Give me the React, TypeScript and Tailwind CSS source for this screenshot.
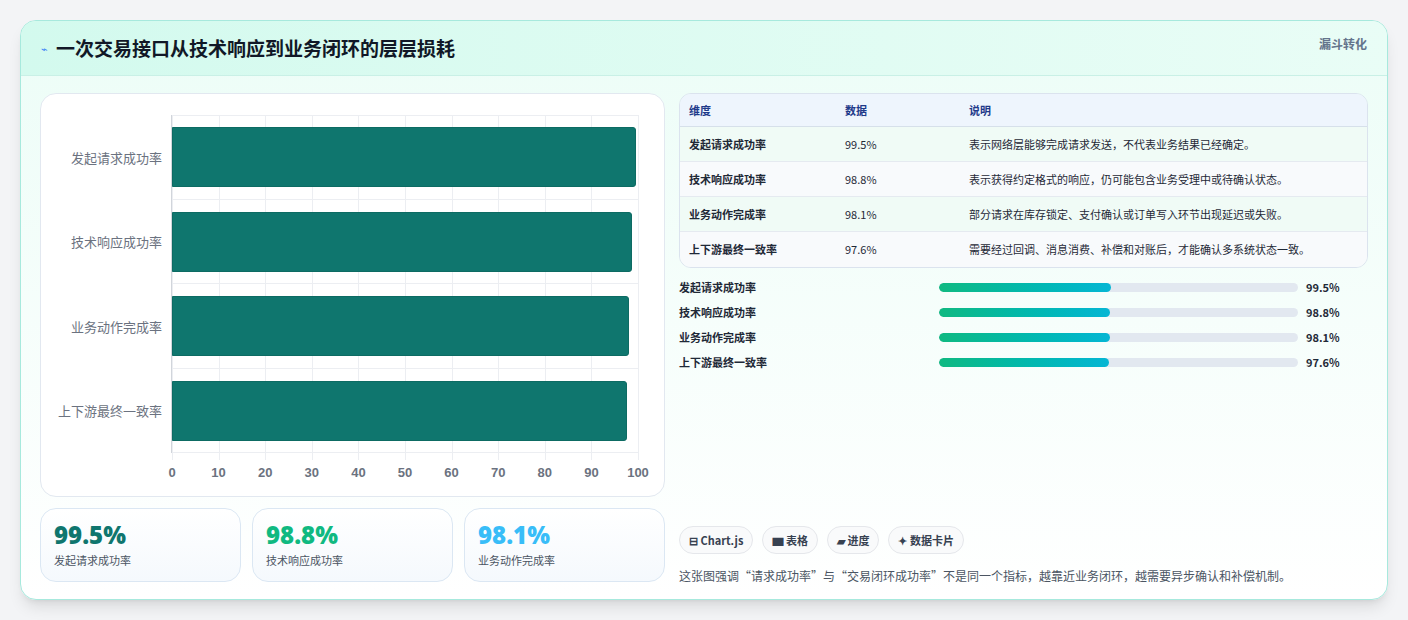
import React from "react";

const rows = [
  { k: "发起请求成功率", v: 99.5, d: "表示网络层能够完成请求发送，不代表业务结果已经确定。", p: 48 },
  { k: "技术响应成功率", v: 98.8, d: "表示获得约定格式的响应，仍可能包含业务受理中或待确认状态。", p: 47.7 },
  { k: "业务动作完成率", v: 98.1, d: "部分请求在库存锁定、支付确认或订单写入环节出现延迟或失败。", p: 47.6 },
  { k: "上下游最终一致率", v: 97.6, d: "需要经过回调、消息消费、补偿和对账后，才能确认多系统状态一致。", p: 47.3 },
];

const font = { fontFamily: '"Noto Sans CJK SC", "Noto Sans", sans-serif' };

export default function App() {
  return (
    <div className="w-[1408px] h-[620px] bg-[#f3f4f6] pt-5 pl-5" style={font}>
      <div className="w-[1368px] h-[580px] rounded-2xl border border-[#a7e9dd] bg-gradient-to-b from-[#ecfdf7] to-white shadow-lg overflow-hidden flex flex-col">
        <div className="h-[55px] shrink-0 flex items-center justify-between px-5 bg-gradient-to-r from-[#d3faee] to-[#e9fdf6] border-b border-[#c9f0e6]">
          <div className="flex items-center gap-2">
            <span className="text-[11px] text-[#3b82f6]">⌁</span>
            <span className="text-[19px] font-bold text-[#111827]">一次交易接口从技术响应到业务闭环的层层损耗</span>
          </div>
          <span className="text-[12px] font-bold text-[#64748b] self-start mt-[14px]">漏斗转化</span>
        </div>
        <div className="flex gap-[14px] px-[19px] pt-[17px]">
          <div className="w-[625px] flex flex-col gap-[11px]">
            <div className="h-[404px] rounded-2xl border border-[#e2e8f0] bg-white relative">
              <div className="absolute left-[130px] top-[21px] w-[467px] h-[338px] border-l border-b border-[#d1d5db]">
                {Array.from({ length: 11 }).map((_, i) => (
                  <div key={i} className="absolute top-0 bottom-[-8px] border-l border-[#eceef2]" style={{ left: `${i * 10}%` }} />
                ))}
                <div className="absolute left-0 right-0 top-0 border-t border-[#eceef2]" />
                {rows.map((r, i) => (
                  <div key={i} className="absolute left-0 right-0 flex items-center" style={{ top: i * 84.5, height: 84.5 }}>
                    <div className="absolute right-[476px] text-[13px] text-[#6b7280] whitespace-nowrap">{r.k}</div>
                    <div className="h-[60px] bg-[#0f766e] rounded-r-[3px] border border-[#0d6b63]" style={{ width: `${r.v}%` }} />
                    <div className="absolute left-0 right-0 bottom-0 border-t border-[#eceef2]" />
                  </div>
                ))}
                {Array.from({ length: 11 }).map((_, i) => (
                  <div key={i} className="absolute top-[348px] -translate-x-1/2 text-[13px] font-semibold text-[#6b7280]" style={{ left: `${i * 10}%`, fontFamily: '"Liberation Sans", sans-serif' }}>{i * 10}</div>
                ))}
              </div>
            </div>
            <div className="grid grid-cols-3 gap-[11px]">
              {[["99.5%", "text-[#0f766e]", "发起请求成功率"], ["98.8%", "text-[#10b981]", "技术响应成功率"], ["98.1%", "text-[#38bdf8]", "业务动作完成率"]].map(([v, c, l]) => (
                <div key={l} className="h-[74px] rounded-2xl border border-[#dbe7f3] bg-gradient-to-b from-white to-[#f5f9fd] px-[13px] pt-[11px]">
                  <div className={`text-[24px] font-extrabold leading-[30px] ${c}`} style={{ fontFamily: '"Open Sans", sans-serif' }}>{v}</div>
                  <div className="text-[11px] text-[#4b5563] mt-[2px]">{l}</div>
                </div>
              ))}
            </div>
          </div>
          <div className="flex-1 flex flex-col">
            <div className="rounded-xl border border-[#dbe3ee] overflow-hidden text-[11px] text-[#1f2937]">
              <div className="flex h-[33px] items-center bg-[#eef5fd] border-b border-[#d6e0ea] font-semibold text-[#1e3a8a]">
                <div className="w-[165px] pl-[9px]">维度</div><div className="w-[124px]">数据</div><div>说明</div>
              </div>
              {rows.map((r, i) => (
                <div key={i} className={`flex h-[35px] items-center ${i < 3 ? "border-b border-[#e5eaf0]" : ""} ${i % 2 ? "bg-[#f8fafc]" : "bg-[#f0fbf6]"}`}>
                  <div className="w-[165px] pl-[9px] font-semibold">{r.k}</div>
                  <div className="w-[124px]">{r.v}%</div>
                  <div>{r.d}</div>
                </div>
              ))}
            </div>
            <div className="mt-[12px] flex flex-col gap-[11px]">
              {rows.map((r, i) => (
                <div key={i} className="flex items-center h-[14px] text-[11px] font-semibold text-[#1f2937]">
                  <div className="w-[260px]">{r.k}</div>
                  <div className="w-[359px] h-[9px] rounded-full bg-[#e2e8f0] overflow-hidden">
                    <div className="h-full rounded-full bg-gradient-to-r from-[#10b981] to-[#06b6d4]" style={{ width: `${r.p}%` }} />
                  </div>
                  <div className="ml-[8px]">{r.v}%</div>
                </div>
              ))}
            </div>
            <div className="mt-[157px] flex gap-[9px] text-[11px] font-semibold text-[#374151]">
              {["⊟ Chart.js", "▆ 表格", "▰ 进度", "✦ 数据卡片"].map((t) => (
                <div key={t} className="h-[28px] px-[9px] flex items-center rounded-full border border-[#e5e7eb] bg-[#f9fafb]">{t}</div>
              ))}
            </div>
            <div className="mt-[13px] text-[12px] text-[#4b5563]">这张图强调“请求成功率”与“交易闭环成功率”不是同一个指标，越靠近业务闭环，越需要异步确认和补偿机制。</div>
          </div>
        </div>
      </div>
    </div>
  );
}
